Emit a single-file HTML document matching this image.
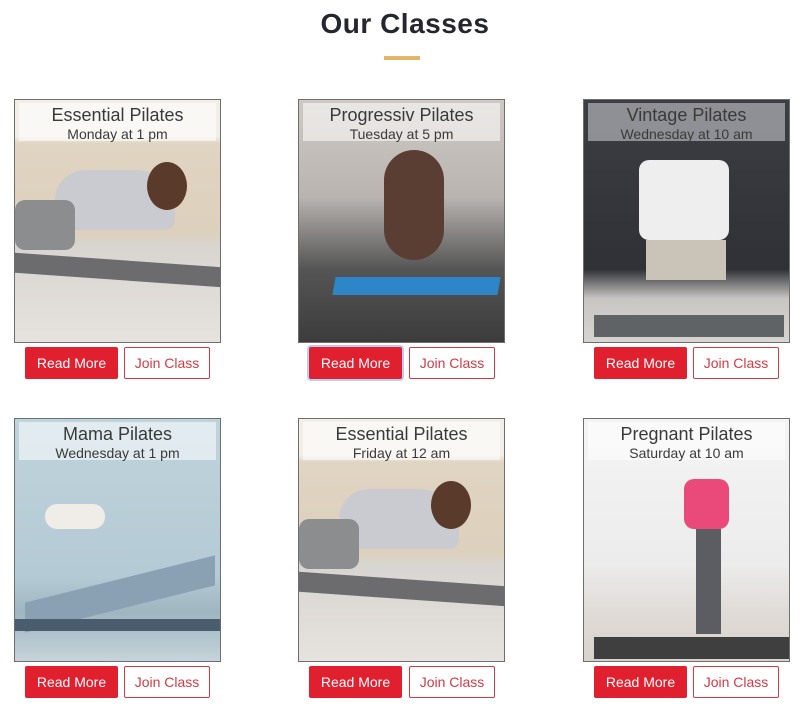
<!DOCTYPE html>
<html><head><style>
body{margin:0;width:810px;height:715px;background:#fff;font-family:"Liberation Sans",sans-serif;position:relative;overflow:hidden}
h1{position:absolute;top:8px;left:0;width:810px;text-align:center;margin:0;font-size:28px;font-weight:bold;color:#262630;letter-spacing:.5px}
.bar{position:absolute;left:384px;top:56px;width:36px;height:4px;background:#e4b66a}
.card{position:absolute;width:207px;height:244px;border:1px solid #6e6e6e;box-sizing:border-box;overflow:hidden}
.lab{position:absolute;left:4px;top:3px;right:4px;height:38px;background:rgba(255,255,255,.55);text-align:center;color:#3a3a3a}
.lab .t{font-size:18px;line-height:22px;margin-top:1px}
.lab .s{font-size:14px;line-height:16px}
.btn{position:absolute;height:32px;box-sizing:border-box;font-size:14px;line-height:30px;text-align:center;border-radius:2px}
.rm{width:93px;background:#e0202f;color:#fff;border:1px solid #e0202f}
.jc{width:86px;background:#fff;color:#d23a45;border:1px solid #d23a45}
.sh{position:absolute}
</style></head><body>
<h1>Our Classes</h1><div class="bar"></div>

<div class="card" style="left:14px;top:99px;background:linear-gradient(#f2efe9 0,#f2efe9 15%,#e0d4c2 18%,#ddd0bd 55%,#d8d5d0 60%,#e6e3de 100%)">
<div class="sh" style="left:40px;top:70px;width:120px;height:60px;background:#c9cbd1;border-radius:30px 40px 10px 10px"></div>
<div class="sh" style="left:0;top:100px;width:60px;height:50px;background:#8c8d8f;border-radius:10px"></div>
<div class="sh" style="left:132px;top:62px;width:40px;height:48px;background:#5a3a2a;border-radius:50%"></div>
<div class="sh" style="left:0;top:160px;width:207px;height:20px;background:#6c6c6e;transform:skewY(4deg)"></div>
<div class="lab"><div class="t">Essential Pilates</div><div class="s">Monday at 1 pm</div></div></div>

<div class="card" style="left:298px;top:99px;background:linear-gradient(#cfc9c4 0,#b9b4b0 40%,#555 70%,#3c3c3c 100%)">
<div class="sh" style="left:85px;top:50px;width:60px;height:110px;background:#5a3e33;border-radius:30px"></div>
<div class="sh" style="left:35px;top:177px;width:165px;height:18px;background:#2e86c8;transform:skewX(-10deg)"></div>
<div class="lab"><div class="t">Progressiv Pilates</div><div class="s">Tuesday at 5 pm</div></div></div>

<div class="card" style="left:583px;top:99px;background:linear-gradient(#3c3e44 0,#2f3136 70%,#c8c6c3 82%,#d6d4d2 100%)">
<div class="sh" style="left:55px;top:60px;width:90px;height:80px;background:#eeeeee;border-radius:10px"></div>
<div class="sh" style="left:62px;top:140px;width:80px;height:40px;background:#c9c3b8"></div>
<div class="sh" style="left:10px;top:215px;width:190px;height:22px;background:#5f6366"></div>
<div class="lab" style="background:rgba(200,200,205,.6)"><div class="t">Vintage Pilates</div><div class="s">Wednesday at 10 am</div></div></div>

<div class="btn rm" style="left:25px;top:347px">Read More</div><div class="btn jc" style="left:124px;top:347px">Join Class</div>
<div class="btn rm" style="left:309px;top:347px;box-shadow:0 0 0 2px #b8cff5">Read More</div><div class="btn jc" style="left:409px;top:347px">Join Class</div>
<div class="btn rm" style="left:594px;top:347px">Read More</div><div class="btn jc" style="left:693px;top:347px">Join Class</div>

<div class="card" style="left:14px;top:418px;background:linear-gradient(#bfd3dc 0,#b4cad4 65%,#9fb5c0 80%,#c6d3da 100%)">
<div class="sh" style="left:30px;top:85px;width:60px;height:25px;background:#f0ece8;border-radius:12px"></div>
<div class="sh" style="left:10px;top:160px;width:190px;height:30px;background:#8aa0b3;transform:skewY(-14deg)"></div>
<div class="sh" style="left:0;top:200px;width:207px;height:12px;background:#4a5d6e"></div>
<div class="lab"><div class="t">Mama Pilates</div><div class="s">Wednesday at 1 pm</div></div></div>

<div class="card" style="left:298px;top:418px;background:linear-gradient(#f2efe9 0,#f2efe9 15%,#e0d4c2 18%,#ddd0bd 55%,#d8d5d0 60%,#e6e3de 100%)">
<div class="sh" style="left:40px;top:70px;width:120px;height:60px;background:#c9cbd1;border-radius:30px 40px 10px 10px"></div>
<div class="sh" style="left:0;top:100px;width:60px;height:50px;background:#8c8d8f;border-radius:10px"></div>
<div class="sh" style="left:132px;top:62px;width:40px;height:48px;background:#5a3a2a;border-radius:50%"></div>
<div class="sh" style="left:0;top:160px;width:207px;height:20px;background:#6c6c6e;transform:skewY(4deg)"></div>
<div class="lab"><div class="t">Essential Pilates</div><div class="s">Friday at 12 am</div></div></div>

<div class="card" style="left:583px;top:418px;background:linear-gradient(#f4f4f4 0,#ececec 60%,#e0dbd6 80%,#d8d2cc 100%)">
<div class="sh" style="left:100px;top:60px;width:45px;height:50px;background:#e94a7a;border-radius:10px"></div>
<div class="sh" style="left:112px;top:110px;width:25px;height:105px;background:#5b5d63"></div>
<div class="sh" style="left:10px;top:218px;width:197px;height:22px;background:#3f3f40"></div>
<div class="lab"><div class="t">Pregnant Pilates</div><div class="s">Saturday at 10 am</div></div></div>

<div class="btn rm" style="left:25px;top:666px">Read More</div><div class="btn jc" style="left:124px;top:666px">Join Class</div>
<div class="btn rm" style="left:309px;top:666px">Read More</div><div class="btn jc" style="left:409px;top:666px">Join Class</div>
<div class="btn rm" style="left:594px;top:666px">Read More</div><div class="btn jc" style="left:693px;top:666px">Join Class</div>
</body></html>
